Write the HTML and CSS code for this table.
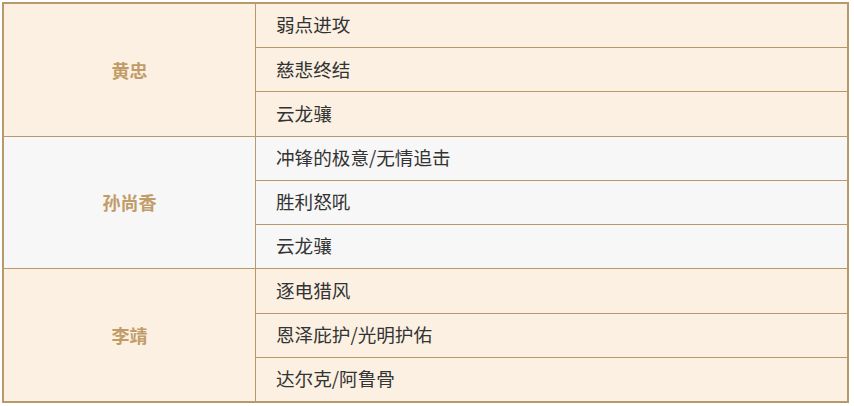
FILE: index.html
```html
<!DOCTYPE html>
<html lang="zh">
<head>
<meta charset="utf-8">
<link rel="stylesheet" href="styles.css">
</head>
<body>
<div class="table">
  <div class="group cream">
    <div class="name">黄忠</div>
    <div class="items">
      <div class="item">弱点进攻</div>
      <div class="item">慈悲终结</div>
      <div class="item">云龙骧</div>
    </div>
  </div>
  <div class="group gray">
    <div class="name">孙尚香</div>
    <div class="items">
      <div class="item">冲锋的极意/无情追击</div>
      <div class="item">胜利怒吼</div>
      <div class="item">云龙骧</div>
    </div>
  </div>
  <div class="group cream">
    <div class="name">李靖</div>
    <div class="items">
      <div class="item">逐电猎风</div>
      <div class="item">恩泽庇护/光明护佑</div>
      <div class="item">达尔克/阿鲁骨</div>
    </div>
  </div>
</div>
</body>
</html>
```
FILE: styles.css
```css
html, body {
  margin: 0;
  padding: 0;
  background: #ffffff;
}
body {
  padding: 2px;
  font-family: "Noto Sans CJK SC", "Noto Sans", sans-serif;
  font-size: 18px;
  color: #333333;
}
.table {
  width: 847px;
  box-sizing: border-box;
  border: 2px solid #b8996c;
  display: flex;
  flex-direction: column;
}
.group {
  display: grid;
  grid-template-columns: 252px 1fr;
  border-bottom: 1px solid #b8996c;
}
.group:last-child {
  border-bottom: none;
}
.cream {
  background: #fbf0e1;
}
.gray {
  background: #f7f7f7;
}
.name {
  display: flex;
  align-items: center;
  justify-content: center;
  border-right: 1px solid #b8996c;
  font-weight: bold;
  color: #c19c68;
}
.items {
  display: flex;
  flex-direction: column;
}
.item {
  height: 41.22px;
  display: flex;
  align-items: center;
  padding-left: 20px;
  padding-bottom: 2px;
  border-bottom: 1px solid #b8996c;
  font-size: 18.6px;
  line-height: 1;
}
.item:last-child {
  border-bottom: none;
}
```
